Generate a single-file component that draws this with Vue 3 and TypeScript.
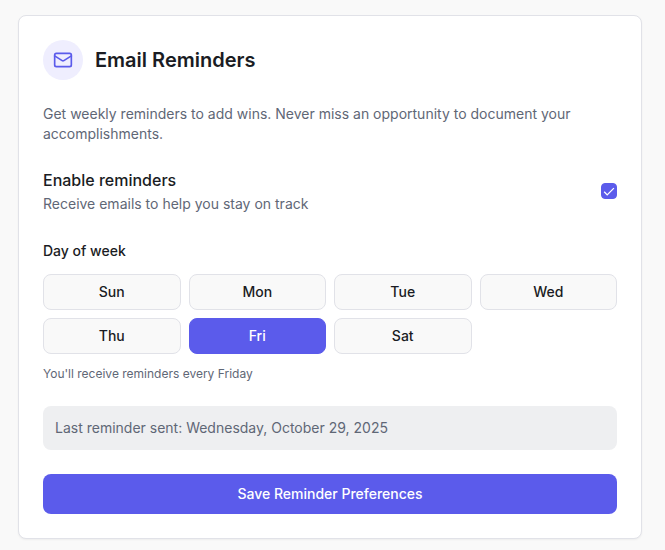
<script setup lang="ts">
import { computed, ref } from 'vue'

interface Day {
  short: string
  full: string
}

const days: Day[] = [
  { short: 'Sun', full: 'Sunday' },
  { short: 'Mon', full: 'Monday' },
  { short: 'Tue', full: 'Tuesday' },
  { short: 'Wed', full: 'Wednesday' },
  { short: 'Thu', full: 'Thursday' },
  { short: 'Fri', full: 'Friday' },
  { short: 'Sat', full: 'Saturday' },
]

const enabled = ref<boolean>(true)
const selected = ref<number>(5)
const lastSent = ref<string>('Wednesday, October 29, 2025')

const selectedName = computed<string>(() => days[selected.value].full)
</script>

<template>
  <main class="page">
    <form class="card" @submit.prevent>
      <header class="header">
        <span class="badge">
          <svg class="icon" viewBox="0 0 24 24" aria-hidden="true">
            <rect x="2" y="4" width="20" height="16" rx="2" />
            <path d="m22 7-8.97 5.7a1.94 1.94 0 0 1-2.06 0L2 7" />
          </svg>
        </span>
        <h1 class="title">Email Reminders</h1>
      </header>

      <p class="text">
        Get weekly reminders to add wins. Never miss an opportunity to document your
        accomplishments.
      </p>

      <div class="toggle">
        <div class="toggle-text">
          <label class="toggle-label" for="enable-reminders">Enable reminders</label>
          <p id="enable-hint" class="text">Receive emails to help you stay on track</p>
        </div>
        <span class="check">
          <input
            id="enable-reminders"
            v-model="enabled"
            class="check-input"
            type="checkbox"
            aria-describedby="enable-hint"
          />
          <svg v-if="enabled" class="check-mark" viewBox="0 0 16 16" aria-hidden="true">
            <path d="M3.2 8.8 6.2 11.9 12.9 5.1" />
          </svg>
        </span>
      </div>

      <div v-if="enabled" class="days" role="group" aria-labelledby="day-label">
        <div class="days-heading">
          <span id="day-label" class="days-label">Day of week</span>
        </div>
        <div class="grid">
          <button
            v-for="(day, index) in days"
            :key="day.short"
            type="button"
            class="day"
            :class="{ active: index === selected }"
            :aria-pressed="index === selected"
            @click="selected = index"
          >
            {{ day.short }}
          </button>
        </div>
        <p class="hint">You'll receive reminders every {{ selectedName }}</p>
      </div>

      <p class="text notice">Last reminder sent: {{ lastSent }}</p>

      <button class="save" type="submit">Save Reminder Preferences</button>
    </form>
  </main>
</template>

<style>
body {
  background: #f9f9f9;
}
</style>

<style scoped>
.page {
  padding: 15px 23px 11px 18px;
  font-family: Inter, 'Liberation Sans', sans-serif;
  color: #1a1c23;
}

.card {
  display: flex;
  flex-direction: column;
  gap: 24px;
  padding: 24px;
  border: 1px solid #e1e2e8;
  border-radius: 8px;
  background: #fff;
  box-shadow: 0 1px 2px rgb(0 0 0 / 5%);
}

.header {
  display: flex;
  align-items: center;
  gap: 12px;
}

.badge {
  display: flex;
  align-items: center;
  justify-content: center;
  width: 40px;
  height: 40px;
  border-radius: 50%;
  background: #efeefe;
}

.icon {
  width: 20px;
  height: 20px;
  fill: none;
  stroke: #5b5beb;
  stroke-width: 2;
  stroke-linecap: round;
  stroke-linejoin: round;
}

.title {
  margin: 0;
  font-size: 20px;
  font-weight: 600;
  line-height: 28px;
}

.text {
  margin: 0;
  font-size: 14px;
  line-height: 20px;
  color: #5f6776;
}

.toggle {
  display: flex;
  align-items: center;
  justify-content: space-between;
  gap: 16px;
}

.toggle-text {
  display: flex;
  flex-direction: column;
  gap: 2px;
}

.toggle-label {
  font-size: 16px;
  font-weight: 500;
  line-height: 24px;
}

.check {
  display: grid;
  flex: none;
}

.check-input,
.check-mark {
  grid-area: 1 / 1;
  width: 16px;
  height: 16px;
}

.check-input {
  appearance: none;
  margin: 0;
  border: 1px solid #5b5beb;
  border-radius: 4px;
  background: #fff;
}

.check-input:checked {
  background: #5b5beb;
}

.check-mark {
  pointer-events: none;
  fill: none;
  stroke: #fff;
  stroke-width: 1.3;
}

.days {
  display: flex;
  flex-direction: column;
  gap: 12px;
}

.days-heading {
  font-size: 16px;
  line-height: 24px;
}

.days-label {
  font-size: 14px;
  font-weight: 500;
  line-height: 20px;
}

.grid {
  display: grid;
  grid-template-columns: repeat(4, 1fr);
  gap: 8px;
}

.day,
.save {
  border-radius: 8px;
  font-family: inherit;
  font-size: 14px;
  font-weight: 500;
  line-height: 20px;
  text-align: center;
  cursor: pointer;
}

.day {
  padding: 7px 12px;
  border: 1px solid #e1e2e8;
  background: #f9f9f9;
  color: #1a1c23;
}

.day.active {
  border-color: #5b5beb;
  background: #5b5beb;
  color: #fff;
}

.hint {
  margin: 0;
  font-size: 12px;
  line-height: 16px;
  color: #5f6776;
}

.notice {
  padding: 12px;
  border-radius: 8px;
  background: #eeeff1;
}

.save {
  padding: 10px 16px;
  border: 0;
  background: #5b5beb;
  color: #fff;
}
</style>
